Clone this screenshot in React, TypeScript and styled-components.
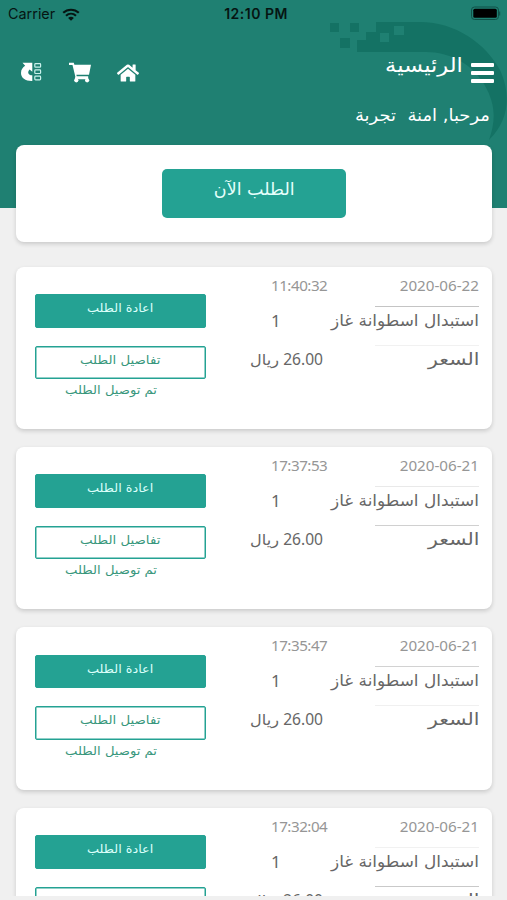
import React from 'react';
import styled, { createGlobalStyle } from 'styled-components';

const GlobalStyle = createGlobalStyle`
  *, *::before, *::after { box-sizing: border-box; }
  html, body { margin: 0; background: #f0f0f0; }
  body { font-family: "Noto Sans", "DejaVu Sans", sans-serif; }
  button { font: inherit; margin: 0; padding: 0; border: 0; background: none; color: inherit; }
`;

const Screen = styled.div`
  width: 507px;
  height: 896px;
  overflow: hidden;
  background: #f0f0f0;
`;

const Header = styled.header`
  position: relative;
  height: 208px;
  background: #1f8072;
  color: #fff;
`;

const Swoosh = styled.svg`
  position: absolute;
  top: 20px;
  right: 0;
`;

const StatusBar = styled.div`
  position: relative;
  display: grid;
  grid-template-columns: 1fr auto 1fr;
  align-items: center;
  height: 28px;
  padding: 0 6px 0 8px;
  color: #061512;
  font: 14.4px/28px Inter, sans-serif;
`;

const Carrier = styled.div`
  display: flex;
  align-items: center;
  gap: 7px;
`;

const Clock = styled.div`
  padding-left: 3px;
  font-size: 14px;
  font-weight: 600;
  letter-spacing: 0.5px;
`;

const Battery = styled.svg`
  justify-self: end;
  margin-bottom: 2px;
`;

const NavBar = styled.nav`
  position: relative;
  display: flex;
  justify-content: space-between;
  height: 64px;
  padding: 16px 13px 0 20px;
`;

const Shortcuts = styled.div`
  display: flex;
  gap: 25.5px;
  padding-top: 18px;
`;

const IconButton = styled.button`
  display: block;
  width: 23px;
  height: 23px;
  svg { display: block; }
`;

const TitleGroup = styled.div`
  display: flex;
  gap: 8px;
`;

const Arabic = styled.span<{ $size: number; $stretch?: number; $origin?: string }>`
  display: inline-block;
  direction: rtl;
  white-space: nowrap;
  font-family: "DejaVu Sans", sans-serif;
  font-size: ${p => p.$size}px;
  transform: scaleX(${p => p.$stretch ?? 1});
  transform-origin: ${p => p.$origin ?? 'right'} center;
`;

const Title = styled.h1`
  margin: 0;
  font-weight: 400;
  line-height: 32px;
`;

const MenuButton = styled(IconButton)`
  margin-top: 18px;
`;

const Greeting = styled.div`
  position: relative;
  padding: 8px 17px 0;
  text-align: right;
  line-height: 30px;
`;

const Card = styled.section`
  margin: 0 15px 0 16px;
  border-radius: 8px;
  background: #fff;
  box-shadow: 0 2px 4px rgba(0, 0, 0, 0.16);
`;

const OrderNow = styled(Card)`
  position: relative;
  display: flex;
  justify-content: center;
  height: 97px;
  margin-top: -63px;
  padding-top: 24px;
`;

const OrderNowButton = styled.button`
  width: 184px;
  height: 49px;
  padding-bottom: 10px;
  border-radius: 5px;
  background: #24a293;
  color: #e6fffb;
`;

const Orders = styled.main`
  display: flex;
  flex-direction: column;
  gap: 18px;
  margin-top: 24.5px;
`;

const OrderCard = styled(Card)`
  display: flex;
  flex: none;
  justify-content: space-between;
  height: 162.4px;
  padding: 0 13px 0 19px;
`;

const Actions = styled.div`
  display: flex;
  flex-direction: column;
  width: 171px;
  padding-top: 27.5px;
`;

const ActionButton = styled.button<{ $outlined?: boolean }>`
  height: 33.5px;
  padding-bottom: 10px;
  border-radius: 2px;
  border: 1px solid #24a293;
  box-shadow: inset 0 0 0 0.5px #24a293;
  background: ${p => (p.$outlined ? '#fff' : '#24a293')};
  color: ${p => (p.$outlined ? '#38977c' : '#dcfffa')};
  margin-bottom: ${p => (p.$outlined ? 0 : 18)}px;
`;

const State = styled.div`
  padding-right: 49px;
  color: #38977c;
  text-align: right;
  line-height: 18px;
`;

const Details = styled.div`
  display: grid;
  grid-template-columns: 77px 104px;
  grid-template-rows: 40px 39px 40px;
  column-gap: 48px;
`;

const Label = styled.div<{ $rule?: string; $muted?: boolean }>`
  display: flex;
  justify-content: flex-end;
  border-bottom: 1px solid ${p => p.$rule ?? 'transparent'};
  color: ${p => (p.$muted ? '#969696' : '#666')};
  font-size: 15.2px;
  line-height: 37px;
  white-space: nowrap;
`;

const Value = styled(Label)<{ $end?: boolean }>`
  justify-content: ${p => (p.$end ? 'flex-end' : 'flex-start')};
  padding: ${p => (p.$end ? '0 4px 0 0' : '0 0 0 21px')};
`;

const Time = styled(Value)`
  letter-spacing: -0.5px;
`;

const Quantity = styled.span`
  font-size: 17px;
  line-height: 28px;
`;

const Amount = styled.span`
  margin-left: 4px;
  font-size: 15.6px;
`;

const LineText = styled.span`
  line-height: 27px;
`;

function WifiIcon() {
  return (
    <svg width="18" height="13" viewBox="0 0 18 13" fill="none" stroke="#061512" strokeWidth="2.2">
      <path d="M1.2 4.8C5.6.7 12.4.7 16.8 4.8" />
      <path d="M4 7.7c2.9-2.6 7.1-2.6 10 0" />
      <path d="M9 12.8 6.1 9.9c1.7-1.5 4.1-1.5 5.8 0Z" fill="#061512" stroke="none" />
    </svg>
  );
}

function ReorderIcon() {
  return (
    <svg width="23" height="23" viewBox="0 0 23 23" fill="#fff">
      <path d="M2.5.8h9.8v9L9.6 7.4C7.2 9.8 7.8 12.9 12.3 13.3V19C5.5 19.2 1 16 1 11c0-3.4 1.8-5.6 4.2-7.2Z" />
      <g fill="none" stroke="#c8f1eb" strokeWidth="1.2">
        <rect x="14.8" y="1.6" width="5.8" height="3.6" rx=".8" />
        <rect x="14.8" y="7.9" width="5.8" height="3.6" rx=".8" />
        <rect x="14.8" y="14.2" width="5.8" height="3.6" rx=".8" />
      </g>
    </svg>
  );
}

function CartIcon() {
  return (
    <svg width="23" height="23" viewBox="0 0 23 23" fill="#fff">
      <path d="M0 .8h4.8l.6 2H22l-2 10H7.4l.3 1.4h11.5v3H5.8l.5-2.6L3.5 3H0Z" />
      <circle cx="7.3" cy="18.3" r="2.1" />
      <circle cx="18.1" cy="18.3" r="2.1" />
    </svg>
  );
}

function HomeIcon() {
  return (
    <svg width="22" height="22" viewBox="0 20 576 576" fill="#fff">
      <path d="M281 174 96 326v165q0 16 16 16h112q16 0 16-16v-96q0-16 16-16h64q16 0 16 16v96q0 16 16 16h112q16 0 16-16V326L295 174q-7-5-14 0ZM572 277l-84-69V69q0-12-12-12h-56q-12 0-12 12v73l-90-74q-30-24-60 0L4 277q-9 8-2 17l26 31q8 9 17 2l236-195q7-5 14 0l236 195q9 7 17-2l26-31q7-9-2-17Z" />
    </svg>
  );
}

function MenuIcon() {
  return (
    <svg width="23" height="23" viewBox="0 0 23 23" fill="#fff">
      <rect y="1" width="23" height="4" rx="1" />
      <rect y="9" width="23" height="4" rx="1" />
      <rect y="17" width="23" height="4" rx="1" />
    </svg>
  );
}

function BrandSwoosh() {
  return (
    <Swoosh width="180" height="122" viewBox="0 0 180 122" fill="#147264">
      <path d="M49 2h44c36 0 66 22 80 48 10 22 11 48-11 70 6-18 8-34-5-56-12-20-34-32-58-32H30V20h9v-8h10Z" />
      <path d="M3 3h9v9H3ZM23 3h9v9h-9ZM13 18h10v10H13Z" />
      <path fill="#1f8072" d="M53 13h9v9h-9ZM67 6h10v9H67Z" />
    </Swoosh>
  );
}

interface Order {
  date: string;
  time: string;
  rules: [string, string];
}

const orders: Order[] = [
  { date: '2020-06-22', time: '11:40:32', rules: ['#c4c4c4', '#f1f1f1'] },
  { date: '2020-06-21', time: '17:37:53', rules: ['#e9e9e9', '#d0d0d0'] },
  { date: '2020-06-21', time: '17:35:47', rules: ['#d2d2d2', '#f0f0f0'] },
  { date: '2020-06-21', time: '17:32:04', rules: ['#f1f1f1', '#c9c9c9'] },
];

function OrderItem({ order }: { order: Order }) {
  return (
    <OrderCard>
      <Actions>
        <ActionButton><Arabic $size={12} $stretch={1.065} $origin="center">اعادة الطلب</Arabic></ActionButton>
        <ActionButton $outlined><Arabic $size={12} $stretch={1.11} $origin="center">تفاصيل الطلب</Arabic></ActionButton>
        <State><Arabic $size={12} $stretch={1.095}>تم توصيل الطلب</Arabic></State>
      </Actions>
      <Details>
        <Time $muted>{order.time}</Time>
        <Label $muted $rule={order.rules[0]}>{order.date}</Label>
        <Value><Quantity>1</Quantity></Value>
        <Label $rule={order.rules[1]}>
          <LineText><Arabic $size={16} $stretch={1.057}>استبدال اسطوانة غاز</Arabic></LineText>
        </Label>
        <Value $end>
          <LineText><Arabic $size={15} $stretch={1.07}>ريال</Arabic><Amount>26.00</Amount></LineText>
        </Value>
        <Label><LineText><Arabic $size={16.5} $stretch={1.24}>السعر</Arabic></LineText></Label>
      </Details>
    </OrderCard>
  );
}

export default function App() {
  return (
    <>
      <GlobalStyle />
      <Screen>
        <Header>
          <BrandSwoosh />
          <StatusBar>
            <Carrier>Carrier<WifiIcon /></Carrier>
            <Clock>12:10 PM</Clock>
            <Battery width="30" height="15" viewBox="0 0 30 15">
              <rect x=".5" y="1" width="27" height="12.5" rx="3" fill="none" stroke="#105148" />
              <rect x="2.3" y="2.8" width="23.5" height="9" rx="1.5" fill="#000" />
              <path d="M28.7 5.5v4" stroke="#105148" />
            </Battery>
          </StatusBar>
          <NavBar>
            <Shortcuts>
              <IconButton aria-label="إعادة الطلب"><ReorderIcon /></IconButton>
              <IconButton aria-label="السلة"><CartIcon /></IconButton>
              <IconButton aria-label="الرئيسية"><HomeIcon /></IconButton>
            </Shortcuts>
            <TitleGroup>
              <Title><Arabic $size={20} $stretch={1.13}>الرئيسية</Arabic></Title>
              <MenuButton aria-label="القائمة"><MenuIcon /></MenuButton>
            </TitleGroup>
          </NavBar>
          <Greeting><Arabic $size={17} $stretch={1.055}>مرحبا, امنة&nbsp; تجربة</Arabic></Greeting>
        </Header>
        <OrderNow>
          <OrderNowButton><Arabic $size={17} $stretch={1.03} $origin="center">الطلب الآن</Arabic></OrderNowButton>
        </OrderNow>
        <Orders>
          {orders.map(order => <OrderItem key={order.time} order={order} />)}
        </Orders>
      </Screen>
    </>
  );
}
